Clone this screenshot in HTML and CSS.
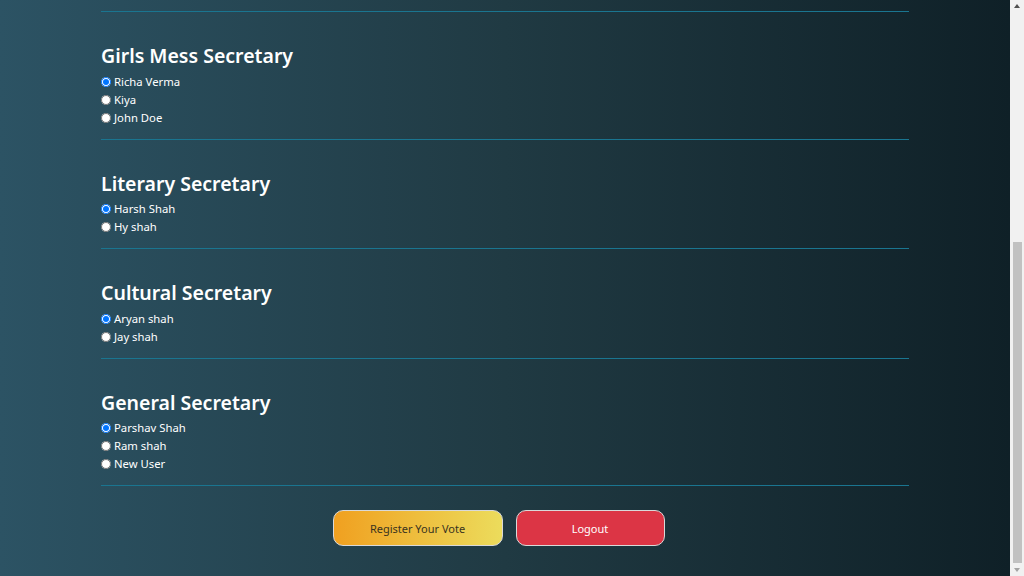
FILE: index.html
```html
<!DOCTYPE html>
<html lang="en">
<head>
<meta charset="utf-8">
<title>Cast Your Vote</title>
<link rel="stylesheet" href="styles.css">
</head>
<body>
<div class="viewport">
  <main class="page">
    <form class="ballot">
      <section class="post">
        <h2>Girls Mess Secretary</h2>
        <label class="option"><input type="radio" name="girls" checked>Richa Verma</label>
        <label class="option"><input type="radio" name="girls">Kiya</label>
        <label class="option"><input type="radio" name="girls">John Doe</label>
      </section>
      <section class="post">
        <h2>Literary Secretary</h2>
        <label class="option"><input type="radio" name="literary" checked>Harsh Shah</label>
        <label class="option"><input type="radio" name="literary">Hy shah</label>
      </section>
      <section class="post">
        <h2>Cultural Secretary</h2>
        <label class="option"><input type="radio" name="cultural" checked>Aryan shah</label>
        <label class="option"><input type="radio" name="cultural">Jay shah</label>
      </section>
      <section class="post">
        <h2>General Secretary</h2>
        <label class="option"><input type="radio" name="general" checked>Parshav Shah</label>
        <label class="option"><input type="radio" name="general">Ram shah</label>
        <label class="option"><input type="radio" name="general">New User</label>
      </section>
      <div class="actions">
        <button type="button" class="btn btn-vote">Register Your Vote</button>
        <button type="button" class="btn btn-logout">Logout</button>
      </div>
    </form>
  </main>
</div>
<aside class="scrollbar" aria-hidden="true">
  <div class="sb-button"><span class="arrow arrow-up"></span></div>
  <div class="sb-track"><div class="sb-thumb"></div></div>
  <div class="sb-button"><span class="arrow arrow-down"></span></div>
</aside>
</body>
</html>
```

FILE: styles.css
```css
html, body {
  margin: 0;
  padding: 0;
}
body {
  display: flex;
  height: 100vh;
  overflow: hidden;
  color: #ffffff;
  font-family: "Noto Sans", "Open Sans", sans-serif;
}
.viewport {
  flex: 1;
  min-width: 0;
  background: linear-gradient(to right, #2c5364, #203a43, #0f2027);
}
.page {
  width: 80%;
  margin: 0 auto;
  padding-top: 11px;
}
.ballot {
  display: flex;
  flex-direction: column;
  border-top: 1px solid #1a7590;
}
.post {
  display: flex;
  flex-direction: column;
  padding: 32px 0 12px;
  border-bottom: 1px solid #1a7590;
}
.post h2 {
  margin: 0 0 4.5px;
  font-size: 19.5px;
  line-height: 24px;
  font-weight: 600;
}
.option {
  display: flex;
  align-items: center;
  height: 18px;
  font-size: 11.3px;
  line-height: 18px;
}
.option input {
  width: 10px;
  height: 10px;
  margin: 0 3px 0 0;
}
.actions {
  display: flex;
  justify-content: center;
  gap: 13px;
  padding: 24px 13px 30px 0;
}
.btn {
  height: 36px;
  border: 1px solid #d9d9d9;
  border-radius: 10px;
  font-family: "Noto Sans", "Open Sans", sans-serif;
  font-size: 11px;
  cursor: pointer;
}
.btn-vote {
  width: 170px;
  background: linear-gradient(to right, #f0a020, #ecdc5c);
  color: #3a3320;
}
.btn-logout {
  width: 149px;
  background: #dc3545;
  color: #ffffff;
}
.scrollbar {
  width: 14px;
  flex: none;
  display: flex;
  flex-direction: column;
  background: #f1f1f1;
}
.sb-button {
  height: 12px;
  display: flex;
  align-items: center;
  justify-content: center;
}
.arrow {
  width: 0;
  height: 0;
  border-left: 3.5px solid transparent;
  border-right: 3.5px solid transparent;
}
.arrow-up {
  border-bottom: 4px solid #505050;
}
.arrow-down {
  border-top: 4px solid #a3a3a3;
}
.sb-track {
  flex: 1;
  display: flex;
  flex-direction: column;
  justify-content: flex-end;
  padding: 0 2px 1px 3px;
}
.sb-thumb {
  height: 321px;
  background: #c1c1c1;
}
```
